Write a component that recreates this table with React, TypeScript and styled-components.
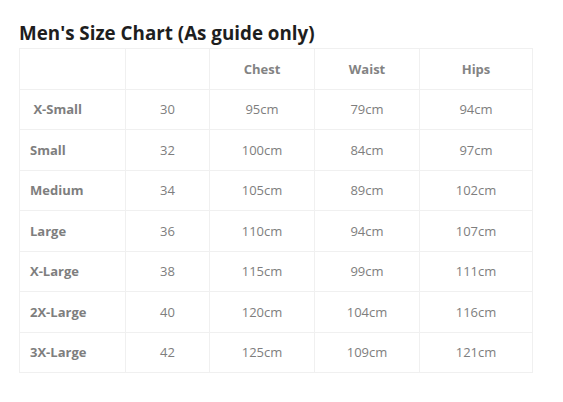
import React from "react";
import styled, { createGlobalStyle } from "styled-components";

const Global = createGlobalStyle`
  html, body { margin: 0; padding: 0; background: #fff; }
  body { font-family: "Open Sans", "Liberation Sans", sans-serif; }
`;

const Page = styled.div`
  padding: 22px 0 0 19px;
  width: 513px;
`;

const Title = styled.h2`
  margin: 0 0 4px 0;
  font-size: 18.8px;
  line-height: 22px;
  font-weight: 700;
  color: #1e1e1e;
`;

const Table = styled.table`
  border-collapse: collapse;
  width: 513px;
  table-layout: fixed;
  border: 1px solid #efefef;
`;

const Col = styled.col<{ $w: number }>`
  width: ${(p) => p.$w}px;
`;

const Th = styled.th`
  height: 39.5px;
  padding: 0;
  border: 1px solid #f0f0f0;
  font-size: 13px;
  font-weight: 700;
  color: #838383;
  text-align: center;
`;

const Td = styled.td<{ $label?: boolean }>`
  height: 39.5px;
  padding: 0 0 0 ${(p) => (p.$label ? "10px" : "0")};
  border: 1px solid #f0f0f0;
  font-size: 13px;
  font-weight: ${(p) => (p.$label ? 700 : 400)};
  color: #7e7e7e;
  text-align: ${(p) => (p.$label ? "left" : "center")};
`;

const widths = [106, 84, 105, 105, 113];

const rows = [
  ["\u00a0X-Small", "30", "95cm", "79cm", "94cm"],
  ["Small", "32", "100cm", "84cm", "97cm"],
  ["Medium", "34", "105cm", "89cm", "102cm"],
  ["Large", "36", "110cm", "94cm", "107cm"],
  ["X-Large", "38", "115cm", "99cm", "111cm"],
  ["2X-Large", "40", "120cm", "104cm", "116cm"],
  ["3X-Large", "42", "125cm", "109cm", "121cm"],
];

export default function App() {
  return (
    <>
      <Global />
      <Page>
        <Title>Men's Size Chart (As guide only)</Title>
        <Table>
          <colgroup>
            {widths.map((w, i) => (
              <Col key={i} $w={w} />
            ))}
          </colgroup>
          <thead>
            <tr>
              <Th></Th>
              <Th></Th>
              <Th>Chest</Th>
              <Th>Waist</Th>
              <Th>Hips</Th>
            </tr>
          </thead>
          <tbody>
            {rows.map((r) => (
              <tr key={r[0]}>
                {r.map((c, i) => (
                  <Td key={i} $label={i === 0}>
                    {c}
                  </Td>
                ))}
              </tr>
            ))}
          </tbody>
        </Table>
      </Page>
    </>
  );
}
